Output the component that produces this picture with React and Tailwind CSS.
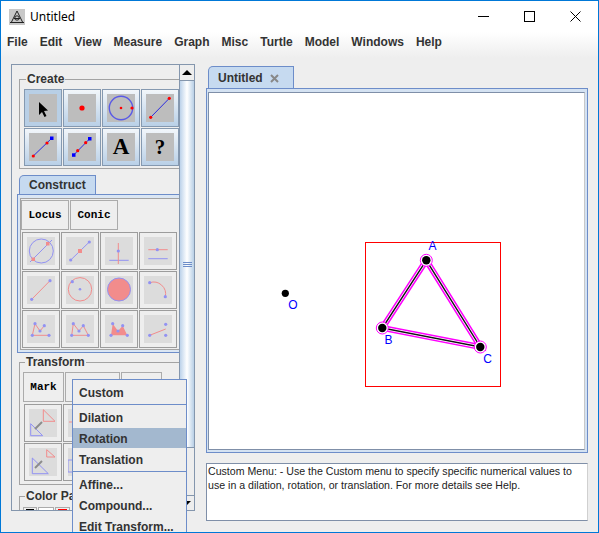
const menus = ["File", "Edit", "View", "Measure", "Graph", "Misc", "Turtle", "Model", "Windows", "Help"]

const RED = "#f28c8c"
const BLUE = "#9292f2"

function Dot({x, y, c = "#f00", r = 1.6}){
    return <circle cx={x} cy={y} r={r} fill={c} />
}

function Line({a, c = "#2a2ae0", w = 1}){
    return <line x1={a[0]} y1={a[1]} x2={a[2]} y2={a[3]} stroke={c} strokeWidth={w} />
}

function ToolButton({selected, children}){
    return (
        <button className={`w-[38px] h-[38px] flex items-center justify-center border border-[#8599b0] ${selected ? 'bg-[#b8cfe6]' : 'bg-gradient-to-b from-[#f2f6fa] to-[#b9d0e7]'}`}>
            <div className="w-7 h-7 bg-[#bdbdbd] flex items-center justify-center">{children}</div>
        </button>
    )
}

function FadedButton({children}){
    return (
        <button className="w-[38px] h-[38px] flex items-center justify-center border-[1.5px] border-[#9c9c9c] bg-[#eeeeee]">
            <svg className="w-7 h-7 bg-[#dcdcdc]" viewBox="0 0 28 28" fill="none">{children}</svg>
        </button>
    )
}

function TextButton({width, children}){
    return (
        <button className={`${width} h-[30px] pt-[1px] border border-[#ababab] bg-[#eeeeee] font-['Liberation_Mono',monospace] font-bold text-[11px] text-black`}>
            {children}
        </button>
    )
}

function Icon({children}){
    return <svg className="w-7 h-7" viewBox="0 0 28 28" fill="none">{children}</svg>
}

function Group({title, className, children}){
    return (
        <fieldset className={`w-[170px] border border-[#a3a3a3] ${className}`}>
            <legend className="ml-[2px] px-[1px] h-[14px] leading-[15px] text-xs font-bold text-[#333]">{title}</legend>
            {children}
        </fieldset>
    )
}

function Triangles({big, small}){
    return (
        <>
            <polygon points={small} stroke={RED} />
            <polygon points={big} stroke={BLUE} />
            <line x1="6" y1="20" x2="13" y2="13" stroke="#8c8c8c" strokeWidth="2" />
        </>
    )
}

function Canvas(){
    const A = [426.3, 260.3]
    const B = [382.3, 328]
    const C = [480.3, 347]
    const points = `${A} ${B} ${C}`
    return (
        <svg className="w-[375px] h-[356px] bg-white" viewBox="209 93 375 356" fill="none">
            <rect x="365.5" y="242.5" width="135" height="144" stroke="#f00" />
            <polygon points={points} stroke="#f0f" strokeWidth="6" />
            <polygon points={points} stroke="#fff" strokeWidth="3" />
            <polygon points={points} stroke="#111" strokeWidth="1.4" />
            {[A, B, C].map((p, i) => (
                <g key={i}>
                    <circle cx={p[0]} cy={p[1]} r="6" fill="#fff" stroke="#f0f" />
                    <circle cx={p[0]} cy={p[1]} r="4.2" fill="#000" />
                </g>
            ))}
            <circle cx="285.3" cy="293.3" r="3.6" fill="#000" />
            <g fill="#00f" fontSize="12" fontFamily="'Liberation Sans', sans-serif" textAnchor="middle">
                <text x="432.5" y="250">A</text>
                <text x="388.5" y="344">B</text>
                <text x="487.5" y="363">C</text>
                <text x="293" y="309">O</text>
            </g>
        </svg>
    )
}

export default function App(){
    return (
        <div className="relative w-[599px] h-[533px] overflow-hidden border border-[#0078d7] bg-[#eeeeee] font-['Liberation_Sans',sans-serif]">
            {/* title bar */}
            <div className="h-[31px] bg-white flex items-center justify-between">
                <div className="flex items-center pl-2">
                    <svg className="w-4 h-4 bg-[#c8c8c8]" viewBox="0 0 16 16" fill="none" stroke="#222">
                        <path d="M8 2L2.5 13M8 2l5.5 11M1 13.5h14M5 9.5h6" />
                        <circle cx="8" cy="9" r="2.2" />
                    </svg>
                    <span className="ml-[5px] font-['Noto_Sans',sans-serif] text-xs text-black">Untitled</span>
                </div>
                <div className="flex">
                    <button className="w-[46px] h-[30px] flex items-center justify-center">
                        <svg className="w-[11px] h-[11px]" viewBox="0 0 11 11" stroke="#000"><path d="M0 5.5h11" /></svg>
                    </button>
                    <button className="w-[46px] h-[30px] flex items-center justify-center">
                        <svg className="w-[11px] h-[11px]" viewBox="0 0 11 11" fill="none" stroke="#000"><rect x=".5" y=".5" width="10" height="10" /></svg>
                    </button>
                    <button className="w-[46px] h-[30px] flex items-center justify-center">
                        <svg className="w-[11px] h-[11px]" viewBox="0 0 11 11" stroke="#000"><path d="M.5 .5l10 10M10.5 .5l-10 10" /></svg>
                    </button>
                </div>
            </div>

            {/* menu bar */}
            <div className="h-[26px] flex items-center gap-[12px] pl-[6px] pb-[6px] bg-gradient-to-b from-white to-[#eeeeee] text-xs font-bold text-[#333]">
                {menus.map((m) => <span key={m}>{m}</span>)}
            </div>

            <div className="flex gap-[11px] pl-[10px] pt-[6px]">
                {/* left panel */}
                <div className="relative">
                    <div className="w-[184px] h-[447px] flex overflow-hidden border border-[#8496ad]">
                        <div className="flex-1 overflow-hidden pl-[7px] pt-[7px]">
                            <Group title="Create" className="pl-1 pb-[2px]">
                                <div className="grid grid-cols-[repeat(4,38px)] gap-[1px] pt-[3px]">
                                    <ToolButton selected>
                                        <Icon><polygon points="10,8 10,21 13,18 15.5,23 17.5,22 15,17 19,16.5" fill="#000" /></Icon>
                                    </ToolButton>
                                    <ToolButton>
                                        <Icon><Dot x={14} y={14} r={2.6} /></Icon>
                                    </ToolButton>
                                    <ToolButton>
                                        <Icon>
                                            <circle cx="14" cy="14" r="11.7" stroke="#5a5ae6" strokeWidth="1.4" />
                                            <Dot x={14} y={14} r={1.3} />
                                            <Dot x={25} y={14} />
                                        </Icon>
                                    </ToolButton>
                                    <ToolButton>
                                        <Icon>
                                            <Line a={[4.7, 23.3, 23.3, 4.3]} />
                                            <Dot x={4.7} y={23.3} />
                                            <Dot x={23.3} y={4.3} />
                                        </Icon>
                                    </ToolButton>
                                    <ToolButton>
                                        <Icon>
                                            <Line a={[4.3, 23, 22.7, 5.3]} />
                                            <Dot x={4.3} y={23} />
                                            <Dot x={18} y={10} />
                                            <rect x="21" y="3.5" width="3.5" height="3.5" fill="#00f" />
                                        </Icon>
                                    </ToolButton>
                                    <ToolButton>
                                        <Icon>
                                            <Line a={[5.7, 22, 21.7, 5.7]} />
                                            <Dot x={9.7} y={17.7} />
                                            <Dot x={17.7} y={9.7} />
                                            <rect x="4" y="20.3" width="3.5" height="3.5" fill="#00f" />
                                            <rect x="20" y="4" width="3.5" height="3.5" fill="#00f" />
                                        </Icon>
                                    </ToolButton>
                                    <ToolButton>
                                        <span className="font-['Liberation_Serif',serif] font-bold text-[23px] leading-7 text-black">A</span>
                                    </ToolButton>
                                    <ToolButton>
                                        <span className="font-['Liberation_Serif',serif] font-bold text-[21px] leading-7 text-black">?</span>
                                    </ToolButton>
                                </div>
                            </Group>

                            {/* construct tab */}
                            <div className="mt-[6px] w-[77px] h-[20px] rounded-tl-[5px] border border-b-0 border-[#6d8dc9] bg-[#c6daf0] pl-[9px] text-xs font-bold leading-[19px] text-[#333]">
                                Construct
                            </div>
                            <div className="-mt-[1px] -ml-[2px] w-[172px] border border-[#6d8dc9] bg-[#dbe6f3] px-[2px] pt-[3px] pb-[2px]">
                                <div className="border border-[#a3a3a3] bg-[#eeeeee] pt-[1px] pb-[1px]">
                                    <div className="flex gap-[1px]">
                                        <TextButton width="w-[48px]">Locus</TextButton>
                                        <TextButton width="w-[48px]">Conic</TextButton>
                                    </div>
                                    <div className="grid grid-cols-[repeat(4,38px)] gap-[1px] pl-[1px] pt-[2px]">
                                        <FadedButton>
                                            <circle cx="14.3" cy="14" r="12" stroke={BLUE} />
                                            <Line a={[3, 25, 25, 3]} c={BLUE} />
                                            <rect x="19" y="5" width="3.5" height="3.5" fill={RED} />
                                            <rect x="4.5" y="20.5" width="3.5" height="3.5" fill={RED} />
                                        </FadedButton>
                                        <FadedButton>
                                            <Line a={[4.7, 23, 23.3, 5]} c={BLUE} />
                                            <Dot x={4.7} y={23} c={BLUE} />
                                            <Dot x={23.3} y={5} c={BLUE} />
                                            <rect x="12" y="12" width="4" height="4" fill={RED} />
                                        </FadedButton>
                                        <FadedButton>
                                            <Line a={[4.3, 23.3, 23.7, 23.3]} c={BLUE} />
                                            <Line a={[13.3, 6, 13.3, 27]} c={RED} />
                                            <Dot x={13.3} y={14} c={BLUE} />
                                        </FadedButton>
                                        <FadedButton>
                                            <Line a={[4.3, 12.7, 23.7, 12.7]} c={RED} />
                                            <Line a={[4.3, 21.7, 23.7, 21.7]} c={BLUE} />
                                            <Dot x={13.3} y={12.7} c={BLUE} />
                                        </FadedButton>
                                        <FadedButton>
                                            <Line a={[4.7, 23.3, 23, 4.7]} c={RED} />
                                            <Dot x={4.7} y={23.3} c={BLUE} />
                                            <Dot x={23} y={4.7} c={BLUE} />
                                        </FadedButton>
                                        <FadedButton>
                                            <circle cx="14" cy="13.3" r="11.7" stroke={RED} />
                                            <Dot x={14} y={13.3} c={BLUE} r={1.3} />
                                            <Dot x={6.3} y={5.7} c={BLUE} />
                                        </FadedButton>
                                        <FadedButton>
                                            <circle cx="14" cy="13.5" r="11.5" fill={RED} stroke={BLUE} />
                                        </FadedButton>
                                        <FadedButton>
                                            <path d="M5.7 6.7A12 12 0 0 1 21.3 20.7" stroke={RED} />
                                            <Dot x={5.7} y={6.7} c={BLUE} />
                                            <Dot x={21.3} y={20.7} c={BLUE} />
                                        </FadedButton>
                                        <FadedButton>
                                            <path d="M5.3 20.3L8 8.7 13 16l4.3-5.3M5.3 20.3H22" stroke={RED} />
                                            {[[5.3, 20.3], [8, 8.7], [13, 16], [17.3, 10.7], [22, 20.3]].map((p) => <Dot key={p[0]} x={p[0]} y={p[1]} c={BLUE} />)}
                                        </FadedButton>
                                        <FadedButton>
                                            <polygon points="5.7,20.3 7.3,8.7 13,16 17.3,10.7 22.3,20.3" stroke={RED} />
                                            {[[5.7, 20.3], [7.3, 8.7], [13, 16], [17.3, 10.7], [22.3, 20.3]].map((p) => <Dot key={p[0]} x={p[0]} y={p[1]} c={BLUE} />)}
                                        </FadedButton>
                                        <FadedButton>
                                            <polygon points="6,20.3 7.7,8.7 13,16 17.7,10.7 22.3,20.3" fill={RED} />
                                            {[[6, 20.3], [7.7, 8.7], [13, 16], [17.7, 10.7], [22.3, 20.3]].map((p) => <Dot key={p[0]} x={p[0]} y={p[1]} c={BLUE} />)}
                                        </FadedButton>
                                        <FadedButton>
                                            <Line a={[5.7, 20.3, 21.7, 14]} c={RED} />
                                            <Dot x={5.7} y={20.3} c={BLUE} />
                                            <Dot x={21.7} y={9.3} c={BLUE} />
                                            <Dot x={21.7} y={20.3} c={BLUE} />
                                        </FadedButton>
                                    </div>
                                </div>
                            </div>

                            <Group title="Transform" className="mt-[2px] pl-[3px] pb-[3px]">
                                <div className="flex gap-[1px] pt-[3px]">
                                    <TextButton width="w-[41px]">Mark</TextButton>
                                    <TextButton width="w-[55px]"></TextButton>
                                    <TextButton width="w-[41px]"></TextButton>
                                </div>
                                <div className="grid grid-cols-[repeat(4,38px)] gap-[1px] pl-[1px] pt-[2px]">
                                    <FadedButton>
                                        <Triangles small="14.3,0.7 14.3,12.3 26,12.3" big="1.7,14.7 1.7,26.7 13.7,26.7" />
                                    </FadedButton>
                                    <FadedButton>
                                        <Line a={[1, 13, 8, 13]} c={RED} />
                                    </FadedButton>
                                    <FadedButton />
                                    <FadedButton />
                                    <FadedButton>
                                        <Triangles small="17.7,1.7 17.7,9 26,9" big="3.3,10 3.3,25.7 19.3,25.7" />
                                    </FadedButton>
                                    <FadedButton>
                                        <rect x="0" y="12" width="6" height="12" stroke={BLUE} />
                                    </FadedButton>
                                    <FadedButton />
                                    <FadedButton />
                                </div>
                            </Group>

                            <Group title="Color Palette" className="mt-[4px] pl-[3px]">
                                <div className="flex gap-[1px] pt-[4px]">
                                    <div className="w-[14px] h-[6px] border border-[#ababab] px-[2px] pt-[1px]"><div className="h-[1px] bg-black"></div></div>
                                    <div className="w-[16px] h-[6px] border border-[#ababab] bg-white"></div>
                                    <div className="w-[15px] h-[6px] border border-[#ababab] px-[2px] pt-[1px]"><div className="h-[1px] bg-[#f00]"></div></div>
                                </div>
                            </Group>
                        </div>

                        {/* scrollbar */}
                        <div className="w-[15px] flex flex-col border-l border-[#8496ad]">
                            <div className="h-[16px] flex items-center justify-center border-b border-[#8496ad] bg-[#eeeeee]">
                                <div className="w-0 h-0 border-x-[5px] border-x-transparent border-b-[5px] border-b-black"></div>
                            </div>
                            <div className="h-[367px] flex items-center justify-center border-b border-[#8496ad] bg-gradient-to-r from-[#bcd2ea] via-white to-[#b8cfe6]">
                                <div className="w-[9px] h-[5px] border-y border-[#6d8dc9] flex items-center"><div className="w-full h-[1px] bg-[#6d8dc9]"></div></div>
                            </div>
                            <div className="flex-1"></div>
                            <div className="h-[15px] flex items-center justify-center border-t border-[#8496ad]">
                                <div className="w-0 h-0 border-x-[4px] border-x-transparent border-t-[4px] border-t-black"></div>
                            </div>
                        </div>
                    </div>

                    {/* popup menu */}
                    <div className="absolute left-[61px] top-[315px] w-[115px] border border-[#6d8dc9] bg-[#eeeeee] text-xs font-bold text-[#333]">
                        <div className="h-[24px] leading-[26px] pl-[6px]">Custom</div>
                        <div className="h-[1px] bg-[#6d8dc9]"></div>
                        <div className="h-[23px] leading-[26px] pl-[6px]">Dilation</div>
                        <div className="h-[20px] leading-[22px] pl-[6px] bg-[#a3b8cf]">Rotation</div>
                        <div className="h-[23px] leading-[24px] pl-[6px]">Translation</div>
                        <div className="h-[1px] bg-[#6d8dc9]"></div>
                        <div className="h-[23px] leading-[26px] pl-[6px]">Affine...</div>
                        <div className="h-[21px] leading-[22px] pl-[6px]">Compound...</div>
                        <div className="h-[21px] leading-[22px] pl-[6px]">Edit Transform...</div>
                    </div>
                </div>

                {/* right column */}
                <div className="w-[382px] pt-[2px]">
                    <div className="ml-[2px] w-[86px] h-[23px] flex items-center gap-[7px] rounded-tl-[5px] border border-b-0 border-[#6d8dc9] bg-[#c6daf0] pl-[9px] text-xs font-bold text-[#333]">
                        Untitled
                        <svg className="w-[9px] h-[9px]" viewBox="0 0 9 9" stroke="#888" strokeWidth="2"><path d="M1 1l7 7M8 1L1 8" /></svg>
                    </div>
                    <div className="-mt-[1px] h-[365px] border border-[#6d8dc9] bg-[#d4e2f2] pt-[3px] pl-[1px]">
                        <div className="w-fit border border-[#7f8fa8] border-r-[#c8c8c8] border-b-[#7f8fa8] flex">
                            <Canvas />
                        </div>
                    </div>
                    <div className="mt-[10px] h-[58px] border border-[#7f8fa8] border-r-[#d0d0d0] bg-white text-[10.6px] leading-[14px] text-[#222] pl-[1px]">
                        Custom Menu: - Use the Custom menu to specify specific numerical values to use in a dilation, rotation, or translation. For more details see Help.
                    </div>
                </div>
            </div>
        </div>
    )
}
